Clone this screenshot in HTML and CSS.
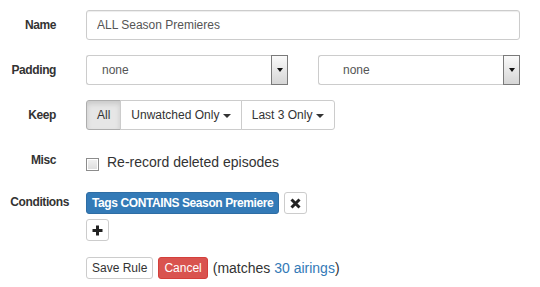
FILE: index.html
```html
<!DOCTYPE html>
<html lang="en">
<head>
    <meta charset="UTF-8">
    <title>Edit Rule</title>
    <link rel="stylesheet" href="styles.css">
</head>
<body>
    <form class="rule-form">
        <div class="form-row">
            <label class="row-label" for="ruleName">Name</label>
            <input type="text" id="ruleName" class="text-input" value="ALL Season Premieres">
        </div>
        <div class="form-row">
            <span class="row-label">Padding</span>
            <div class="padding-pair">
                <div class="fake-select pad-start">
                    <span class="select-text">none</span>
                    <span class="select-arrow"><span class="arrow-tri"></span></span>
                </div>
                <div class="fake-select pad-end">
                    <span class="select-text">none</span>
                    <span class="select-arrow"><span class="arrow-tri"></span></span>
                </div>
            </div>
        </div>
        <div class="form-row">
            <span class="row-label">Keep</span>
            <div class="control">
                <div class="btn-group">
                    <button type="button" class="btn btn-sm active">All</button>
                    <button type="button" class="btn btn-sm">Unwatched Only <span class="caret"></span></button>
                    <button type="button" class="btn btn-sm">Last 3 Only <span class="caret"></span></button>
                </div>
            </div>
        </div>
        <div class="form-row misc-row">
            <span class="row-label">Misc</span>
            <label class="check-line">
                <input type="checkbox" class="check-box">
                <span>Re-record deleted episodes</span>
            </label>
        </div>
        <div class="form-row">
            <span class="row-label label-wide">Conditions</span>
            <div class="conditions">
                <div class="cond-line">
                    <button type="button" class="btn btn-xs btn-primary tag">Tags CONTAINS Season Premiere</button>
                    <button type="button" class="btn btn-xs icon-btn" title="Remove">
                        <svg width="11" height="11" viewBox="0 0 11 11"><path d="M1.5 1.5 L9.5 9.5 M9.5 1.5 L1.5 9.5" stroke="#222" stroke-width="3" fill="none"/></svg>
                    </button>
                </div>
                <div class="cond-line">
                    <button type="button" class="btn btn-xs icon-btn" title="Add">
                        <svg width="11" height="11" viewBox="0 0 11 11"><rect x="0.5" y="4" width="10" height="3" fill="#222"/><rect x="4" y="0.5" width="3" height="10" fill="#222"/></svg>
                    </button>
                </div>
            </div>
        </div>
        <div class="form-row actions-row">
            <span class="row-label"></span>
            <div class="actions">
                <button type="button" class="btn btn-xs">Save Rule</button>
                <button type="button" class="btn btn-xs btn-danger">Cancel</button>
                <span class="matches">(matches <a href="#">30 airings</a>)</span>
            </div>
        </div>
    </form>
</body>
</html>
```

FILE: styles.css
```css
body {
    margin: 0;
    padding: 10px 20px 0 0;
    font-family: 'Liberation Sans', Arial, sans-serif;
    font-size: 14px;
    color: #333;
    background: #fff;
}
.form-row {
    display: grid;
    grid-template-columns: 56px 1fr;
    column-gap: 30px;
    margin-bottom: 15px;
}
.row-label {
    text-align: right;
    font-weight: bold;
    font-size: 12px;
    letter-spacing: -0.4px;
    line-height: 30px;
    white-space: nowrap;
}
.label-wide {
    margin-right: -13px;
}
.text-input {
    box-sizing: border-box;
    width: 100%;
    height: 30px;
    padding: 5px 10px;
    border: 1px solid #ccc;
    border-radius: 3px;
    font-family: inherit;
    font-size: 12px;
    color: #555;
    box-shadow: inset 0 1px 1px rgba(0, 0, 0, .075);
}
.padding-pair {
    display: grid;
    grid-template-columns: 1fr 1fr;
    column-gap: 30px;
}
.fake-select {
    display: flex;
    align-items: center;
    height: 28px;
    border: 1px solid #ccc;
    border-right: none;
    border-radius: 3px 0 0 3px;
    font-size: 12px;
    color: #555;
}
.pad-start .select-text {
    padding-left: 15px;
}
.pad-end .select-text {
    padding-left: 24px;
}
.select-text {
    flex: 1;
}
.select-arrow {
    display: flex;
    align-items: center;
    justify-content: center;
    box-sizing: border-box;
    width: 17px;
    height: 30px;
    margin: -1px 0;
    border: 1px solid #7a7a7a;
    background: linear-gradient(#fafafa, #d6d6d6);
}
.arrow-tri {
    width: 0;
    height: 0;
    border-top: 4px solid #111;
    border-left: 3.5px solid transparent;
    border-right: 3.5px solid transparent;
}
.btn {
    display: inline-block;
    box-sizing: border-box;
    margin: 0;
    border: 1px solid #ccc;
    border-radius: 3px;
    background: #fff;
    color: #333;
    font-family: inherit;
    font-size: 12px;
    line-height: 18px;
    cursor: pointer;
    vertical-align: middle;
    white-space: nowrap;
}
.btn-sm {
    height: 30px;
    padding: 5px 10px;
}
.btn-xs {
    height: 22px;
    padding: 1px 5px;
}
.btn-group {
    display: flex;
}
.btn-group .btn {
    border-radius: 0;
}
.btn-group .btn + .btn {
    margin-left: -1px;
}
.btn-group .btn:first-child {
    border-radius: 3px 0 0 3px;
}
.btn-group .btn:last-child {
    border-radius: 0 3px 3px 0;
}
.btn.active {
    background: #e6e6e6;
    border-color: #adadad;
    box-shadow: inset 0 3px 5px rgba(0, 0, 0, .125);
}
.caret {
    display: inline-block;
    width: 0;
    height: 0;
    margin-left: 0;
    vertical-align: middle;
    border-top: 4px solid #333;
    border-left: 4px solid transparent;
    border-right: 4px solid transparent;
}
.misc-row {
    margin-bottom: 12px;
}
.check-line {
    display: flex;
    align-items: flex-start;
    padding-top: 7px;
    line-height: 20px;
    font-size: 14px;
}
.check-box {
    appearance: none;
    width: 13px;
    height: 13px;
    margin: 6px 8px 0 0;
    border: 1px solid #8c8c8c;
    background: linear-gradient(#f2f2f2, #dcdcdc);
    box-shadow: inset 0 0 0 1px #fff;
}
.conditions {
    padding-top: 5px;
}
.cond-line {
    display: flex;
    gap: 5px;
    margin-bottom: 5px;
}
.tag {
    font-weight: bold;
    letter-spacing: -0.4px;
    color: #fff;
}
.btn-primary {
    background: #337ab7;
    border-color: #2e6da4;
    color: #fff;
}
.btn-danger {
    background: #d9534f;
    border-color: #d43f3a;
    color: #fff;
}
.icon-btn {
    display: flex;
    align-items: center;
    justify-content: center;
    width: 23px;
    padding: 0;
}
.actions-row {
    margin-top: -4px;
}
.actions {
    display: flex;
    align-items: center;
    gap: 5px;
}
.matches {
    font-size: 14px;
}
.matches a {
    color: #337ab7;
    text-decoration: none;
}
```
